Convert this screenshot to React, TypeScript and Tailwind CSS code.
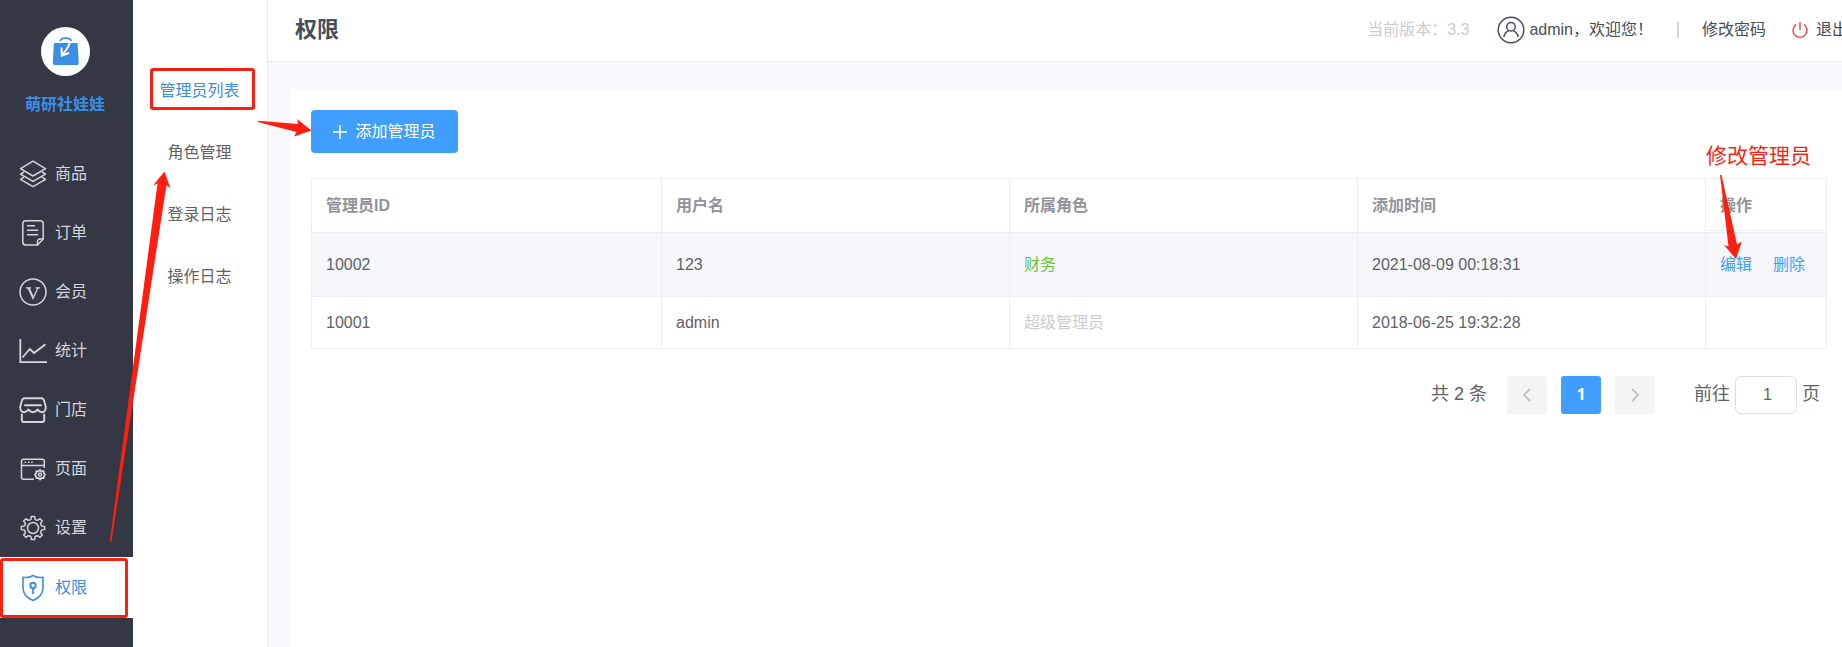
import React from "react";

const iconBase = "h-7 w-7 shrink-0";

function LayersIcon() {
  return (
    <svg className={iconBase} viewBox="0 0 28 28" fill="none" stroke="currentColor" strokeWidth="1.5" strokeLinejoin="round">
      <path d="M14 1.2 26.5 8.6 14 16 1.5 8.6Z" />
      <path d="M5 12 1.5 14.2 14 21.4 26.5 14.2 23 12" />
      <path d="M5 17.2 1.5 19.4 14 26.6 26.5 19.4 23 17.2" />
    </svg>
  );
}

function OrderIcon() {
  return (
    <svg className={iconBase} viewBox="0 0 28 28" fill="none" stroke="currentColor" strokeWidth="1.5" strokeLinejoin="round" strokeLinecap="round">
      <path d="M18.5 26H6.5A3 3 0 0 1 3.8 23V4.5A3 3 0 0 1 6.5 1.8H21.5A3 3 0 0 1 24.2 4.5V20Z" />
      <path d="M18.5 26V22.5A2.4 2.4 0 0 1 21 20H24.2" />
      <path d="M8.5 6.8H15.5M8.5 11.3H18.5M8.5 15.8H18.5" />
    </svg>
  );
}

function VipIcon() {
  return (
    <svg className={iconBase} viewBox="0 0 28 28" fill="none" stroke="currentColor" strokeWidth="1.5">
      <circle cx="14" cy="14" r="13" />
      <path strokeWidth="1.3" d="M7 9.8H12M16.5 9.8H21M9 9.8 14 20.5 19 9.8" />
      <path strokeWidth="1.3" d="M10 9.8 14.4 19.500" />
    </svg>
  );
}

function ChartIcon() {
  return (
    <svg className={iconBase} viewBox="0 0 28 28" fill="none" stroke="currentColor" strokeWidth="1.8">
      <path d="M1.3 2V25.2H28" />
      <path d="M3.5 20.5 10.8 12 15 16 26.5 7.2" />
    </svg>
  );
}

function ShopIcon() {
  return (
    <svg className={iconBase} viewBox="0 0 28 28" fill="none" stroke="currentColor" strokeWidth="1.9" strokeLinejoin="round" strokeLinecap="round">
      <path d="M5.5 2.2H22.5C24 2.2 24.8 3.4 25.2 5L26.8 11C27 14 25.5 16.2 23 16.2C21 16.2 19.6 15.2 18.6 13.6C17.6 15.2 16 16.2 14 16.2C12 16.2 10.4 15.2 9.4 13.6C8.4 15.2 7 16.2 5 16.2C2.5 16.2 1 14 1.2 11L2.8 5C3.2 3.4 4 2.2 5.5 2.2Z" />
      <path d="M6 9.2H22" />
      <path d="M2.8 18.5V24A2 2 0 0 0 4.8 26H23.2A2 2 0 0 0 25.2 24V18.5" />
    </svg>
  );
}

function PageIcon() {
  return (
    <svg className={iconBase} viewBox="0 0 28 28" fill="none" stroke="currentColor" strokeWidth="1.5">
      <path d="M15 24.2H4.5A2 2 0 0 1 2.5 22.2V6.2A2 2 0 0 1 4.5 4.2H23.3A2 2 0 0 1 25.3 6.2V13" />
      <path d="M2.5 10.5H25.3" />
      <path d="M5.5 7.3H7M9 7.3H10.5M12.3 7.3H13.8" />
      <path strokeWidth="1.8" strokeLinejoin="round" d="m21 14.8 1.4 1.7 2.2-.3.4 2.1 1 1.4-1 1.4-.4 2.1-2.2-.3L21 24.6l-1.4-1.7-2.2.3-.4-2.1-1-1.4 1-1.4.4-2.1 2.2.3Z" />
      <circle cx="21" cy="19.7" r="1.4" />
    </svg>
  );
}

const gearPath = Array.from({ length: 8 }, (_, i) => {
  const point = (radius: number, degrees: number) => {
    const angle = ((i * 45 + degrees - 90) * Math.PI) / 180;
    return `${(14 + radius * Math.cos(angle)).toFixed(2)} ${(14 + radius * Math.sin(angle)).toFixed(2)}`;
  };
  return `${i === 0 ? "M" : "L"}${point(9, -13)}L${point(11.7, -8)}L${point(11.7, 8)}L${point(9, 13)}Q${point(8.2, 22.5)} ${point(9, 32)}`;
}).join("");

function GearIcon() {
  return (
    <svg className={iconBase} viewBox="0 0 28 28" fill="none" stroke="currentColor" strokeWidth="1.5" strokeLinejoin="round">
      <path d={gearPath + "Z"} />
      <circle cx="14" cy="14" r="5.5" />
    </svg>
  );
}

function ShieldIcon() {
  return (
    <svg className={iconBase} viewBox="0 0 28 28" fill="none" stroke="currentColor" strokeWidth="1.6" strokeLinejoin="round">
      <path d="M14 1.5C11 3.6 7.5 3.8 4 3.4V14C4 19.5 8.5 24 14 26.5C19.5 24 24 19.5 24 14V3.4C20.5 3.8 17 3.6 14 1.5Z" />
      <circle cx="14" cy="11.5" r="2.7" strokeWidth="2" />
      <path d="M14 14V20" strokeWidth="1.8" />
    </svg>
  );
}

const menu = [
  { label: "商品", Icon: LayersIcon },
  { label: "订单", Icon: OrderIcon },
  { label: "会员", Icon: VipIcon },
  { label: "统计", Icon: ChartIcon },
  { label: "门店", Icon: ShopIcon },
  { label: "页面", Icon: PageIcon },
  { label: "设置", Icon: GearIcon },
];

const subMenu = ["角色管理", "登录日志", "操作日志"];

function Sidebar() {
  return (
    <aside className="w-[133px] shrink-0 bg-[#343844] text-[#d3d6dc]">
      <div className="flex h-[144px] flex-col items-center pt-[27px] pr-[3px]">
        <svg className="h-[49px] w-[49px]" viewBox="0 0 49 49" fill="none">
          <circle cx="24.5" cy="24.5" r="24.5" fill="#fff" />
          <path d="M14 16H35.5A1.2 1.2 0 0 1 36.7 17.2L37.700 36A2 2 0 0 1 35.7 38H13.8A2 2 0 0 1 11.8 36L12.8 17.2A1.2 1.2 0 0 1 14 16Z" fill="#3a8ee6" />
          <path d="M19 14C20.5 10.2 28.5 10.2 30.5 14" stroke="#3a8ee6" strokeWidth="1.6" />
          <path d="M29 14.5C28.8 19 26 22 21.5 27.5M20.5 20.5 20.8 28.5 28 26" stroke="#fff" strokeWidth="2" />
        </svg>
        <div className="mt-[17px] text-base leading-6 font-bold text-[#3a8ee6]">萌研社娃娃</div>
      </div>
      <nav aria-label="主菜单">
        {menu.map(({ label, Icon }) => (
          <a key={label} href="#" className="flex h-[59px] items-center gap-2 pl-[19px]">
            <Icon />
            {label}
          </a>
        ))}
        <a href="#" aria-current="page" className="flex h-[61px] items-center gap-2 bg-white pl-[19px] text-[#3a8ee6]">
          <ShieldIcon />
          权限
        </a>
      </nav>
    </aside>
  );
}

function SubNav() {
  return (
    <nav aria-label="权限菜单" className="flex w-[135px] shrink-0 flex-col border-r border-[#e8eaec] pt-[60px] pr-px text-center text-[#606266]">
      <a href="#" aria-current="page" className="flex h-[62px] items-center justify-center text-[#3a8ee6]">
        管理员列表
      </a>
      {subMenu.map((label) => (
        <a key={label} href="#" className="flex h-[62px] items-center justify-center">
          {label}
        </a>
      ))}
    </nav>
  );
}

function Header() {
  return (
    <header className="flex h-[62px] items-center justify-between overflow-hidden border-b border-[#e8eaec] bg-white pb-[2px] pl-[27px] whitespace-nowrap text-[#464c5b]">
      <h1 className="text-[22px] leading-8 font-bold">权限</h1>
      <div className="-mr-[6px] flex items-center">
        <span className="text-[#cccccc]">当前版本：3.3</span>
        <svg className="mr-1 ml-7 h-7 w-7" viewBox="0 0 28 28" fill="none" stroke="currentColor" strokeWidth="1.5">
          <circle cx="14" cy="14" r="12.8" />
          <circle cx="14" cy="10.8" r="4.3" />
          <path d="M6.8 21C7.5 17.5 9.5 15.5 11.8 14.6M16.2 14.6C18.5 15.5 20.5 17.5 21.2 21" />
        </svg>
        <span>admin，欢迎您！</span>
        <span className="ml-6 h-4 w-0.5 bg-[#d5d5d5]" />
        <a href="#" className="ml-[23px]">修改密码</a>
        <a href="#" className="ml-[26px] flex items-center gap-2">
          <svg className="h-4 w-4" viewBox="0 0 16 16" fill="none" stroke="#ff1e1e" strokeWidth="1.2">
            <path d="M4.2 2.5A7 7 0 1 0 11.8 2.5M8 0V8" />
          </svg>
          退出
        </a>
      </div>
    </header>
  );
}

const th = "border border-[#ebeef5] px-[14px] text-left font-bold";
const td = "border border-[#ebeef5] px-[14px]";

function AdminTable() {
  return (
    <table className="mt-[25px] w-full table-fixed border-collapse text-[#606266]">
      <thead className="text-[#909399]">
        <tr className="h-[54px]">
          <th className="w-[350px] border border-[#ebeef5] px-[14px] text-left font-bold">管理员ID</th>
          <th className={th}>用户名</th>
          <th className={th}>所属角色</th>
          <th className={th}>添加时间</th>
          <th className="relative w-[121px] border border-[#ebeef5] px-[14px] text-left font-bold after:absolute after:inset-x-0 after:bottom-px after:border-b after:border-[#ebeef5]">
            操作
          </th>
        </tr>
      </thead>
      <tbody>
        <tr className="h-[64px] bg-[#f5f7fa]">
          <td className={td}>10002</td>
          <td className={td}>123</td>
          <td className="border border-[#ebeef5] px-[14px] text-[#67c23a]">财务</td>
          <td className={td}>2021-08-09 00:18:31</td>
          <td className={td}>
            <div className="flex gap-[21px] whitespace-nowrap text-[#409eff]">
              <button type="button">编辑</button>
              <button type="button">删除</button>
            </div>
          </td>
        </tr>
        <tr className="h-[52px]">
          <td className={td}>10001</td>
          <td className={td}>admin</td>
          <td className="border border-[#ebeef5] px-[14px] text-[#cccccc]">超级管理员</td>
          <td className={td}>2018-06-25 19:32:28</td>
          <td className={td} />
        </tr>
      </tbody>
    </table>
  );
}

function Pagination() {
  return (
    <div className="mt-[27px] flex items-center justify-end pr-[7px] text-lg leading-6 text-[#606266]">
      <span className="mr-5 mb-0.5">共 2 条</span>
      <div className="flex gap-[14px]">
        <button type="button" aria-label="上一页" disabled className="flex h-[38px] w-10 items-center justify-center rounded-[3px] bg-[#f4f4f5] text-[#c0c4cc]">
          <svg className="h-4 w-4" viewBox="0 0 16 16" fill="none" stroke="currentColor" strokeWidth="2">
            <path d="M11 2 5 8 11 14" />
          </svg>
        </button>
        <button type="button" aria-current="page" className="h-[38px] w-10 rounded-[3px] bg-[#409eff] pb-0.5 font-['Noto_Sans',sans-serif] text-base font-bold text-white">
          1
        </button>
        <button type="button" aria-label="下一页" disabled className="flex h-[38px] w-10 items-center justify-center rounded-[3px] bg-[#f4f4f5] text-[#c0c4cc]">
          <svg className="h-4 w-4" viewBox="0 0 16 16" fill="none" stroke="currentColor" strokeWidth="2">
            <path d="M5 2 11 8 5 14" />
          </svg>
        </button>
      </div>
      <label className="ml-[39px] flex items-center gap-[5px]">
        <span className="mb-0.5">前往</span>
        <input type="text" defaultValue="1" className="h-[38px] w-[62px] rounded-md border border-[#dcdfe6] bg-white pl-[3px] text-center text-base" />
        <span className="mb-0.5">页</span>
      </label>
    </div>
  );
}

function Annotations() {
  return (
    <div className="pointer-events-none absolute inset-0">
      <svg className="absolute top-0 left-0 h-[647px] w-[320px]" viewBox="0 0 320 647" fill="none">
        <rect x="1.5" y="559.5" width="125" height="57" rx="1.5" stroke="#ff1e10" strokeWidth="3" />
        <rect x="151.5" y="69.5" width="102" height="39" rx="1.5" stroke="#ff1e10" strokeWidth="3" />
        <path fill="#ff1e10" d="M164.5 171.5 170.5 188.5 166.5 185 111.5 541.5 109.7 542 157.5 183.5 153 185.5Z" />
        <path fill="#ff1e10" d="M311.5 130.5 297 119 298.2 124 258 120.7 258 122 296.5 132 294 136.5Z" />
      </svg>
      <span className="absolute top-[141px] right-[31px] text-[21px] leading-[30px] text-[#ff1e10]">修改管理员</span>
      <svg className="absolute top-[174px] right-[92px] h-[86px] w-[30px]" viewBox="1720 174 30 86">
        <path fill="#ff1e10" d="M1720 175 1721.5 175 1737 244.5 1741.8 241.5 1736 259 1724 245 1728.5 246.5Z" />
      </svg>
    </div>
  );
}

export default function App() {
  return (
    <div className="relative flex min-h-screen overflow-hidden bg-white font-['Liberation_Sans','Noto_Sans_CJK_SC',sans-serif] text-base leading-6">
      <Sidebar />
      <SubNav />
      <div className="flex min-w-0 flex-1 flex-col bg-[#f6f8fc]">
        <Header />
        <main className="mt-[27px] ml-[22px] flex-1 bg-white pt-[21px] pr-[15px] pl-[21px]">
          <button type="button" className="flex h-[43px] w-[147px] items-center justify-center gap-2 rounded bg-[#409eff] text-white">
            <svg className="h-[14px] w-[14px]" viewBox="0 0 14 14" stroke="currentColor" strokeWidth="1.5">
              <path d="M7 0V14M0 7H14" />
            </svg>
            添加管理员
          </button>
          <AdminTable />
          <Pagination />
        </main>
      </div>
      <Annotations />
    </div>
  );
}
